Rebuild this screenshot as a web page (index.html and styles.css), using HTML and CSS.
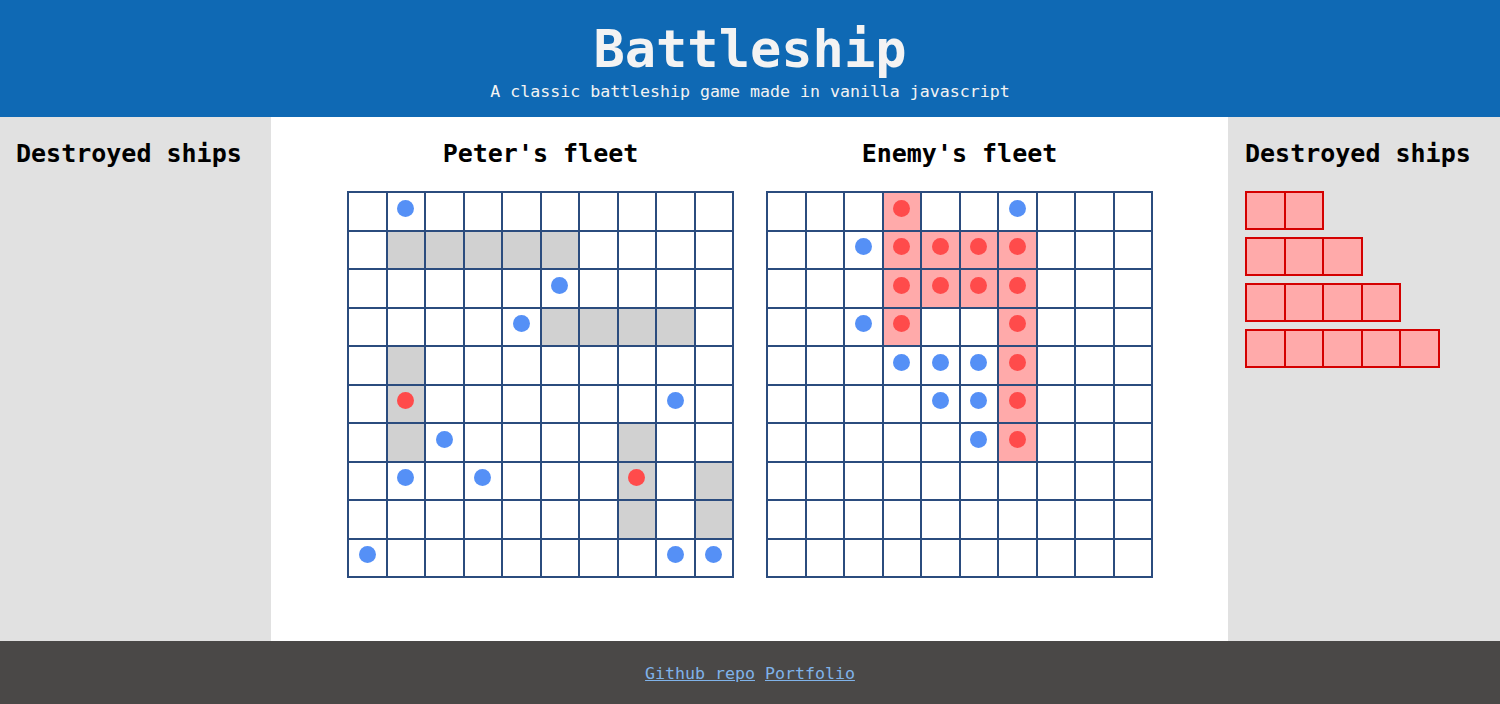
FILE: index.html
```html
<!DOCTYPE html>
<html>
  <head>
    <title>Battleship</title>
    <link rel="stylesheet" href="styles.css">
    <meta name="viewport" content="width=device-width, initial-scale=1.0" />
  </head>
  <body>
    <header class="top">
      <h1>Battleship</h1>
      <p class="subtitle">A classic battleship game made in vanilla javascript</p>
    </header>
    <main class="game">
      <aside class="side side-left">
        <h2>Destroyed ships</h2>
      </aside>
      <section class="fleets">
        <div class="fleet">
          <h2>Peter's fleet</h2>
          <div class="board" id="player_board"></div>
        </div>
        <div class="fleet">
          <h2>Enemy's fleet</h2>
          <div class="board" id="enemy_board"></div>
        </div>
      </section>
      <aside class="side side-right">
        <h2>Destroyed ships</h2>
        <div class="graveyard" id="graveyard"></div>
      </aside>
    </main>
    <footer class="bottom">
      <a href="#">Github repo</a> <a href="#">Portfolio</a>
    </footer>
    <script type="text/javascript">
      // s = ship, o = miss, x = hit ship, h = sunk (enemy, pink), . = water
      const playerRows = [
        ".o........",
        ".sssss....",
        ".....o....",
        "....ossss.",
        ".s........",
        ".x......o.",
        ".so....s..",
        ".o.o...x.s",
        ".......s.s",
        "o.......oo",
      ];
      const enemyRows = [
        "...h..o...",
        "..ohhhh...",
        "...hhhh...",
        "..oh..h...",
        "...oooh...",
        "....ooh...",
        ".....oh...",
        "..........",
        "..........",
        "..........",
      ];
      function drawBoard(id, rows) {
        let board = document.getElementById(id);
        let html = "";
        for (let r = 0; r < 10; r++)
          for (let c = 0; c < 10; c++) {
            let ch = rows[r][c];
            let cls = "cell";
            let dot = "";
            if (ch == "s") cls += " ship";
            if (ch == "x") {
              cls += " ship";
              dot = '<span class="dot dot-hit"></span>';
            }
            if (ch == "h") {
              cls += " sunk";
              dot = '<span class="dot dot-hit"></span>';
            }
            if (ch == "o") dot = '<span class="dot dot-miss"></span>';
            html += '<div class="' + cls + '">' + dot + "</div>";
          }
        board.innerHTML = html;
      }
      drawBoard("player_board", playerRows);
      drawBoard("enemy_board", enemyRows);
      let graveyard = document.getElementById("graveyard");
      let str = "";
      [2, 3, 4, 5].forEach((len) => {
        str += '<div class="wreck">';
        for (let i = 0; i < len; i++) str += '<div class="wreck-cell"></div>';
        str += "</div>";
      });
      graveyard.innerHTML = str;
    </script>
  </body>
</html>
```

FILE: styles.css
```css
* {
  box-sizing: border-box;
}
body {
  margin: 0;
  min-height: 100vh;
  display: flex;
  flex-direction: column;
  font-family: "DejaVu Sans Mono", "Liberation Mono", monospace;
  color: #000000;
}
.top {
  background: #0f69b4;
  color: #f3f3f3;
  text-align: center;
  padding: 19px 0 15px;
}
.top h1 {
  margin: 0;
  font-size: 52px;
  line-height: 60px;
  font-weight: bold;
}
.subtitle {
  margin: 3px 0 0;
  font-size: 16.6px;
  line-height: 20px;
}
.game {
  flex: 1;
  display: flex;
}
.side {
  background: #e1e1e1;
  padding: 22px 16px;
}
.side-left {
  width: 271px;
}
.side-right {
  width: 272px;
  padding-left: 17px;
}
h2 {
  margin: 0;
  font-size: 25px;
  line-height: 30px;
  font-weight: bold;
  white-space: nowrap;
}
.fleets {
  flex: 1;
  background: #ffffff;
  display: flex;
  justify-content: center;
  gap: 32px;
  padding: 22px 0 0 1px;
}
.fleet h2 {
  text-align: center;
  margin-bottom: 22px;
}
.board {
  display: grid;
  grid-template-columns: repeat(10, 38.5px);
  grid-auto-rows: 38.5px;
  border: 1px solid #2b4c7e;
}
.cell {
  border: 1px solid #2b4c7e;
  background: #ffffff;
  display: flex;
  align-items: center;
  justify-content: center;
}
.cell.ship {
  background: #d1d1d1;
}
.cell.sunk {
  background: #ffaaaa;
}
.dot {
  width: 17px;
  height: 17px;
  margin-bottom: 6px;
  border-radius: 50%;
}
.dot-miss {
  background: #5590f6;
}
.dot-hit {
  background: #ff4b4b;
}
.graveyard {
  margin-top: 22px;
  display: flex;
  flex-direction: column;
  align-items: flex-start;
  gap: 7px;
}
.wreck {
  display: flex;
  border: 1px solid #d40000;
}
.wreck-cell {
  width: 38.5px;
  height: 37px;
  border: 1px solid #d40000;
  background: #ffaaaa;
}
.bottom {
  background: #4a4847;
  text-align: center;
  padding: 23px 0 20px;
  font-size: 16.6px;
  line-height: 20px;
}
.bottom a {
  color: #80b3ea;
}
```
